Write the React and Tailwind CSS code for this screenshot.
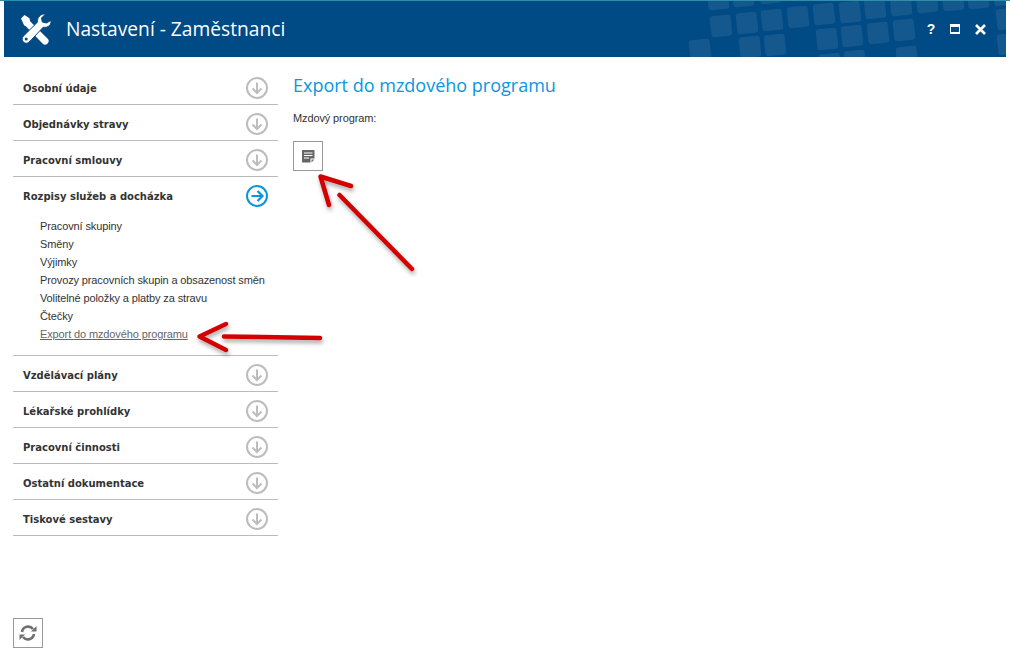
import React from "react";

const topItems = ["Osobní údaje", "Objednávky stravy", "Pracovní smlouvy"];
const subItems = [
  "Pracovní skupiny",
  "Směny",
  "Výjimky",
  "Provozy pracovních skupin a obsazenost směn",
  "Volitelné položky a platby za stravu",
  "Čtečky",
];
const bottomItems = [
  "Vzdělávací plány",
  "Lékařské prohlídky",
  "Pracovní činnosti",
  "Ostatní dokumentace",
  "Tiskové sestavy",
];

// header background tiles, centre points in page pixels
const tiles = [
  [718, -1], [743, -4], [770, -7],
  [721, 26], [747, 23], [772, 20], [798, 17], [824, 14], [850, 12], [875, 8], [901, 5], [927, 2], [953, 0], [978, -2], [1004, -5],
  [1007, 19],
  [750, 47], [775, 45], [827, 39], [852, 36], [878, 33], [904, 30], [1008, 44],
  [700, 50], [830, 64], [855, 61], [907, 57],
];

function ArrowCircle({ active }) {
  const color = active ? "#0b95dc" : "#bdbdbd";
  return (
    <svg width="24" height="24" viewBox="0 0 24 24" fill="none" stroke={color} strokeWidth="2">
      <circle cx="12" cy="12" r="10" />
      {active ? (
        <path d="M6.5 12H17M12.5 7l5 5-5 5" strokeWidth="2.2" />
      ) : (
        <path d="M12 6.5V17M7.5 12.5l4.5 4.5 4.5-4.5" />
      )}
    </svg>
  );
}

function MenuRow({ label, active }) {
  return (
    <div className="flex h-[35px] items-center justify-between pl-[10px] pr-[9px] pt-[3px]">
      <span className="font-['DejaVu_Sans'] text-[10px] font-bold text-[#333333]">{label}</span>
      <ArrowCircle active={active} />
    </div>
  );
}

function ToolsIcon() {
  return (
    <svg width="32" height="32" viewBox="0 0 32 32" fill="#ffffff">
      <path d="M1 5.500 4.500 2l5 3.200.6 3L28 26a3.600 3.600 0 0 1-5 5L5.600 13l-1.400-.6z" />
      <path d="M31 7.500c.7 3.700-2.600 7.800-7.800 6.700L9.300 29a4.100 4.100 0 0 1-6-5.800L17.600 9C16.700 4.500 21 .2 25.500 1l-4 4 .8 4 4 1z" stroke="#004a85" strokeWidth="1" />
      <circle cx="6.200" cy="26" r="1.500" fill="#004a85" />
    </svg>
  );
}

function RefreshIcon() {
  return (
    <svg width="18" height="18" viewBox="0 0 18 18" fill="none" stroke="#707070" strokeWidth="2.6">
      <path d="M3 8a6.200 6.200 0 0 1 11-3" />
      <path d="M15 10a6.200 6.200 0 0 1-11 3" />
      <path d="M12 7.500h5.500V2z" fill="#707070" stroke="none" />
      <path d="M6 10.500H.5V16z" fill="#707070" stroke="none" />
    </svg>
  );
}

export default function App() {
  return (
    <div className="relative flex h-[658px] w-[1010px] flex-col overflow-hidden bg-white">
      <div className="h-px bg-[#2e8fa8]" />
      <header className="relative mx-1 flex h-14 items-center overflow-hidden bg-[#004a85] text-white">
        <svg className="absolute left-0 top-0" width="1002" height="56" viewBox="4 1 1002 56">
          {tiles.map(([x, y]) => (
            <rect
              key={`${x}-${y}`}
              x={x - 10.5}
              y={y - 10.5}
              width="21"
              height="21"
              rx="3"
              fill="#ffffff"
              opacity="0.08"
              transform={`rotate(-6 ${x} ${y})`}
            />
          ))}
        </svg>
        <div className="relative ml-[16px]">
          <ToolsIcon />
        </div>
        <h1 className="relative ml-[14px] font-['Open_Sans'] text-[19.2px] font-normal">Nastavení - Zaměstnanci</h1>
        <div className="relative ml-auto mr-[20px] flex items-center gap-[15px]">
          <span className="-mr-[1px] w-[10px] text-center font-['Liberation_Sans'] text-[14px] font-bold">?</span>
          <span className="h-[10px] w-[10px] border-x border-b-2 border-t-[3px] border-white" />
          <svg width="11" height="11" viewBox="0 0 11 11" stroke="#ffffff" strokeWidth="2.6">
            <path d="M1 1l9 9M10 1l-9 9" />
          </svg>
        </div>
      </header>

      <div className="flex flex-1 pl-[13px] pt-[12px]">
        <nav className="w-[265px] font-['Liberation_Sans']">
          {topItems.map((label) => (
            <div key={label} className="border-b border-[#bbbbbb]">
              <MenuRow label={label} />
            </div>
          ))}
          <div className="border-b border-[#bbbbbb]">
            <MenuRow label="Rozpisy služeb a docházka" active />
            <ul className="pb-[12px] pl-[27px] pt-[5px] text-[11px] leading-[18px] tracking-[-0.12px] text-[#333333]">
              {subItems.map((s) => (
                <li key={s}>{s}</li>
              ))}
              <li className="text-[#666666] underline">Export do mzdového programu</li>
            </ul>
          </div>
          {bottomItems.map((label) => (
            <div key={label} className="border-b border-[#bbbbbb]">
              <MenuRow label={label} />
            </div>
          ))}
        </nav>

        <main className="ml-[15px] flex-1 font-['Liberation_Sans']">
          <h2 className="mt-[3px] font-['Open_Sans'] text-[18px] leading-[26px] text-[#0a96e0]">Export do mzdového programu</h2>
          <p className="mt-[11px] text-[11px] leading-[18px] tracking-[-0.12px] text-[#333333]">Mzdový program:</p>
          <button className="mt-[14px] flex h-[30px] w-[30px] items-center justify-center border border-[#999999]">
            <svg width="13" height="13" viewBox="0 0 13 13">
              <path d="M0 0h12.500v8.500h-4v4H0z" fill="#666666" />
              <path d="M2 3h8.500M2 5.500h8.500M2 8h5" stroke="#ffffff" />
              <path d="M9.500 12.500V9.500h3z" fill="#777777" />
            </svg>
          </button>
        </main>
      </div>

      <div className="pb-[10px] pl-[13px]">
        <button className="flex h-[30px] w-[30px] items-center justify-center border border-[#999999]">
          <RefreshIcon />
        </button>
      </div>

      {/* red annotation arrows drawn over the screenshot */}
      <svg className="pointer-events-none absolute left-0 top-0" width="1010" height="658" fill="none" stroke="#d40000" strokeLinecap="round" strokeLinejoin="round">
        <defs>
          <filter id="shadow" x="-20%" y="-20%" width="140%" height="140%">
            <feDropShadow dx="1" dy="3" stdDeviation="2" floodColor="#000000" floodOpacity="0.35" />
          </filter>
        </defs>
        <g filter="url(#shadow)" strokeWidth="4.5">
          <path d="M351 186 320.500 176.500 329 205" />
          <path d="M339.500 195 412 269" />
          <path d="M226 324 199.500 336.500 226 350" />
          <path d="M224 336.500 320 338" />
        </g>
      </svg>
    </div>
  );
}
